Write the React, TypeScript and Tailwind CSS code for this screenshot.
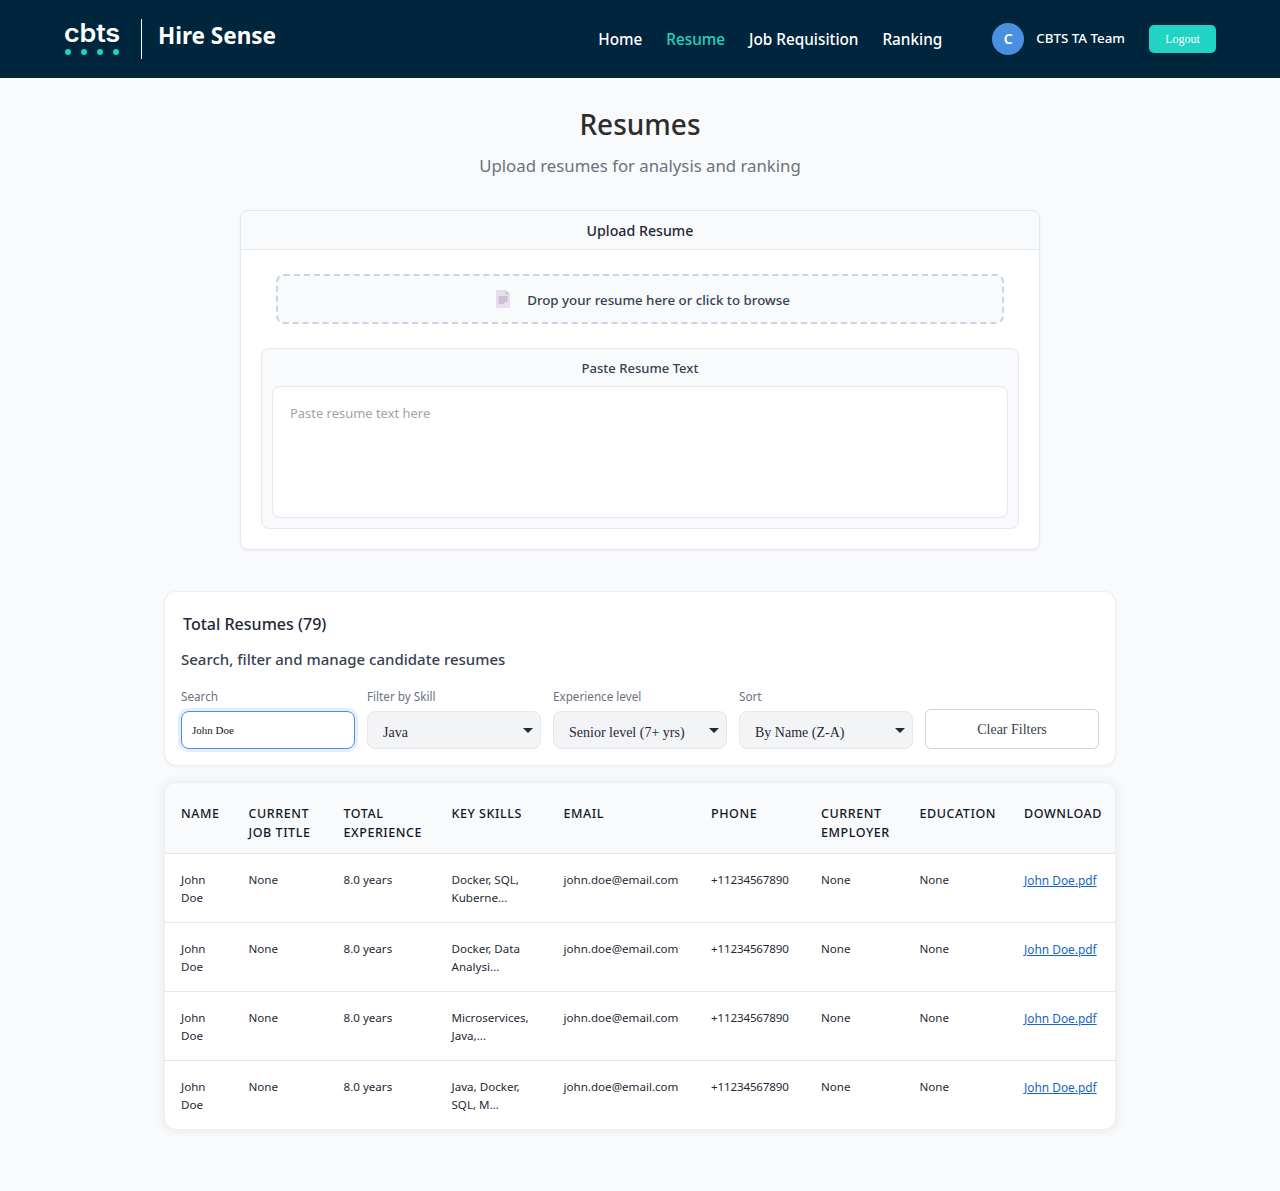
import React from "react";

const ui = "font-['Noto_Sans',sans-serif]";
const serif = "font-['Liberation_Serif',serif]";

const rows = [
  ["Docker, SQL,", "Kuberne..."],
  ["Docker, Data", "Analysi..."],
  ["Microservices,", "Java,..."],
  ["Java, Docker,", "SQL, M..."],
];

const colWidths = ["w-[67.5px]", "w-[95px]", "w-[108px]", "w-[112px]", "w-[147.5px]", "w-[110px]", "w-[98.5px]", "w-[104.5px]", "w-[107px]"];
const heads: string[][] = [["Name"], ["Current", "Job Title"], ["Total", "Experience"], ["Key Skills"], ["Email"], ["Phone"], ["Current", "Employer"], ["Education"], ["Download"]];

function FileIcon() {
  return (
    <svg width="14" height="18" viewBox="0 0 14 18" aria-hidden="true">
      <path d="M0 0H9.5L14 4.5V18H0Z" fill="#e8deef" />
      <path d="M9.5 0L14 4.5H9.5Z" fill="#cdbfda" />
      <path d="M2.5 7H11.5M2.5 9H11.5M2.5 11H11.5M2.5 13H8.5" stroke="#b0a3bd" strokeWidth="1" />
    </svg>
  );
}

function Select({ label, value }: { label: string; value: string }) {
  return (
    <div className="flex flex-col">
      <label className="mb-[7px] text-[11.7px] leading-[16px] text-[#6b7280]">{label}</label>
      <div className="relative h-[38px]">
        <select
          defaultValue={value}
          className={`${serif} h-[38px] w-full appearance-none rounded-[8px] border border-[#e5e7eb] bg-[#f3f4f6] pl-[15px] pr-6 pt-[5px] text-[14px] text-[#1f2937]`}
        >
          <option>{value}</option>
        </select>
        <svg className="pointer-events-none absolute right-[8px] top-[17px]" width="10" height="5" viewBox="0 0 10 5" aria-hidden="true">
          <path d="M0 0H10L5 5Z" fill="#1f2937" />
        </svg>
      </div>
    </div>
  );
}

export default function App() {
  return (
    <div className={`${ui} min-h-[1191px] bg-[#f9fafb] text-[#1f2937]`}>
      <header className="flex h-[78px] items-center justify-between bg-[#00263e] px-[64px]">
        <div className="flex items-center">
          <div className="flex w-[56px] flex-col pb-[2px]">
            <span className="origin-left scale-x-[1.08] font-['Inter',sans-serif] text-[25px] font-semibold leading-[24px] tracking-[-0.2px] text-white">cbts</span>
            <div className="mt-[4px] flex justify-between px-px">
              {[0, 1, 2, 3].map((i) => (
                <span key={i} className="h-[6px] w-[6px] rounded-full bg-[#20d3c2]" />
              ))}
            </div>
          </div>
          <div className="ml-[21px] h-[40px] w-px bg-white" />
          <span className="ml-[16px] pb-[6px] text-[22.5px] font-bold leading-[30px] text-white">Hire Sense</span>
        </div>
        <div className="flex items-center">
          <nav className="flex items-center gap-[24px] text-[15.3px] font-medium text-white">
            <span>Home</span>
            <span className="text-[#20d3c2]">Resume</span>
            <span>Job Requisition</span>
            <span>Ranking</span>
          </nav>
          <div className="ml-[50px] flex h-[32px] w-[32px] items-center justify-center rounded-full bg-[#4a90e2] pb-[2px] text-[14px] font-semibold text-white">C</div>
          <span className="ml-[12px] pb-[2px] text-[13.35px] font-medium text-white">CBTS TA Team</span>
          <button className={`${serif} ml-[24px] h-[28px] w-[67px] rounded-[5px] bg-[#20d3c2] text-[12px] text-white`}>Logout</button>
        </div>
      </header>

      <main className="flex flex-col items-center">
        <h1 className="mt-[24px] text-[28px] font-medium leading-[44px] text-[#2d2d2d]">Resumes</h1>
        <p className="mt-[6px] text-[16.75px] leading-[28px] text-[#6b7280]">Upload resumes for analysis and ranking</p>

        <section className="mt-[30px] w-[800px] overflow-hidden rounded-[8px] border border-[#e2e8f0] bg-white shadow-[0_1px_3px_rgba(0,0,0,0.05)]">
          <div className="flex h-[39px] items-center justify-center border-b border-[#e2e8f0] bg-[#f8fafc] pt-[2px] text-[14.2px] font-medium">Upload Resume</div>
          <div className="px-[20px] pb-[20px] pt-[24px]">
            <div className="mx-[15px] flex h-[50px] items-center justify-center gap-[17px] rounded-[8px] border-2 border-dashed border-[#cbd5e1] bg-[#f8fafc] pl-[6px]">
              <FileIcon />
              <span className="pt-[4px] text-[13.3px] font-medium text-[#374151]">Drop your resume here or click to browse</span>
            </div>
            <div className="mt-[24px] rounded-[8px] border border-[#e2e8f0] bg-[#f8fafc] px-[10px] pb-[10px]">
              <div className="flex h-[37px] items-center justify-center pt-[2px] text-[13.05px] font-medium text-[#374151]">Paste Resume Text</div>
              <textarea
                placeholder="Paste resume text here"
                className="block h-[132px] w-full resize-none rounded-[8px] border border-[#e2e8f0] bg-white px-[17px] py-[16px] text-[12.95px] leading-[20px] outline-none placeholder:text-[#a3a3a3]"
              />
            </div>
          </div>
        </section>

        <section className="mt-[41px] w-[952px] rounded-[12px] border border-[#eeeff2] bg-white px-[16px] pb-[16px] shadow-[0_1px_3px_rgba(0,0,0,0.06)]">
          <h2 className="ml-[2px] mt-[20px] text-[16.05px] font-medium leading-[24px] text-[#1f2937]">Total Resumes (79)</h2>
          <p className="mt-[11px] text-[15px] font-medium leading-[24px] text-[#374151]">Search, filter and manage candidate resumes</p>
          <div className="mt-[17px] grid grid-cols-5 items-end gap-[12px]">
            <div className="flex flex-col">
              <label className="mb-[7px] text-[11.7px] leading-[16px] text-[#6b7280]">Search</label>
              <input
                readOnly
                value="John Doe"
                className={`${serif} h-[38px] w-full rounded-[8px] border-[1.5px] border-[#4a90e2] bg-white px-[10px] text-[11px] text-[#111827] shadow-[0_0_0_3px_rgba(74,144,226,0.15)] outline-none`}
              />
            </div>
            <Select label="Filter by Skill" value="Java" />
            <Select label="Experience level" value="Senior level (7+ yrs)" />
            <Select label="Sort" value="By Name (Z-A)" />
            <button className={`${serif} h-[40px] rounded-[6px] border border-[#cbd5e1] bg-white text-[14px] text-[#374151]`}>Clear Filters</button>
          </div>
        </section>

        <section className="mb-[61px] mt-[16px] w-[952px] overflow-hidden rounded-[12px] border border-[#eeeff2] bg-white shadow-[0_0_12px_rgba(0,0,0,0.08)]">
          <table className="w-[950px] table-fixed border-collapse text-left">
            <colgroup>
              {colWidths.map((c) => (
                <col key={c} className={c} />
              ))}
            </colgroup>
            <thead>
              <tr className="h-[70px] border-b border-[#e5e7eb] bg-[#f8fafc]">
                {heads.map((h) => (
                  <th key={h.join()} className="whitespace-nowrap px-[16px] pb-[10px] pt-[21px] align-top text-[12.5px] font-medium uppercase leading-[19px] tracking-[0.55px] text-[#111827]">
                    {h.map((l) => (
                      <div key={l}>{l}</div>
                    ))}
                  </th>
                ))}
              </tr>
            </thead>
            <tbody>
              {rows.map((skills, i) => (
                <tr key={i} className="h-[69px] border-b border-[#e5e7eb] text-[11.6px] leading-[18px] text-[#1f2937] last:border-b-0">
                  <td className="px-[16px] pb-[15px] pt-[17px] align-top"><div>John</div><div>Doe</div></td>
                  <td className="px-[16px] pb-[15px] pt-[17px] align-top">None</td>
                  <td className="px-[16px] pb-[15px] pt-[17px] align-top">8.0 years</td>
                  <td className="whitespace-nowrap px-[16px] pb-[15px] pt-[17px] align-top"><div>{skills[0]}</div><div>{skills[1]}</div></td>
                  <td className="whitespace-nowrap px-[16px] pb-[15px] pt-[17px] align-top">john.doe@email.com</td>
                  <td className="px-[16px] pb-[15px] pt-[17px] align-top tracking-[-0.15px]">+11234567890</td>
                  <td className="px-[16px] pb-[15px] pt-[17px] align-top">None</td>
                  <td className="px-[16px] pb-[15px] pt-[17px] align-top">None</td>
                  <td className="whitespace-nowrap px-[16px] pb-[15px] pt-[17px] align-top"><a className="text-[11.9px] text-[#1565c0] underline">John Doe.pdf</a></td>
                </tr>
              ))}
            </tbody>
          </table>
        </section>
      </main>
    </div>
  );
}
